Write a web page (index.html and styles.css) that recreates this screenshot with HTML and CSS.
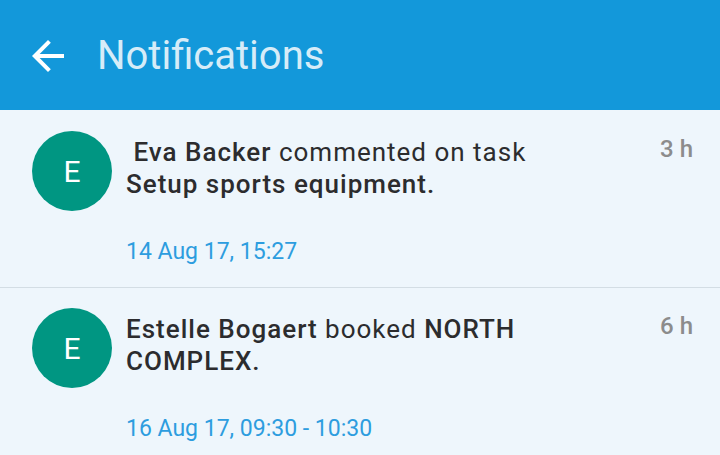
FILE: index.html
```html
<!DOCTYPE html>
<html>
<head>
<title>Notifications</title>
<link rel="stylesheet" href="styles.css">
</head>
<body>
    <header class="app-bar">
        <button class="back" aria-label="Back">
            <svg viewBox="0 0 24 24" width="48" height="48">
                <path d="M20 11H7.83l5.59-5.59L12 4l-8 8 8 8 1.41-1.41L7.83 13H20v-2z" fill="#ffffff"/>
            </svg>
        </button>
        <h1 class="title">Notifications</h1>
    </header>
    <main class="list">
        <div class="item">
            <div class="avatar">E</div>
            <div class="body">
                <p class="message"><b>&nbsp;Eva Backer</b> commented on task <b>Setup sports equipment.</b></p>
                <div class="date">14 Aug 17, 15:27</div>
            </div>
            <div class="time">3 h</div>
        </div>
        <div class="item">
            <div class="avatar">E</div>
            <div class="body">
                <p class="message"><b>Estelle Bogaert</b> booked <b>NORTH COMPLEX.</b></p>
                <div class="date">16 Aug 17, 09:30 - 10:30</div>
            </div>
            <div class="time">6 h</div>
        </div>
    </main>
</body>
</html>
```

FILE: styles.css
```css
/**
 * Generic styles
 */
* {
    box-sizing: border-box;
}
html, body {
    margin: 0;
    height: 100%;
}
body {
    font-family: Roboto, "Noto Sans", sans-serif;
    background-color: #eef6fc;
    overflow: hidden;
}

/**
 * App bar
 */
.app-bar {
    display: flex;
    align-items: center;
    height: 110px;
    padding-left: 24px;
    background-color: #1398da;
}
.back {
    display: flex;
    padding: 0;
    border: 0;
    background: none;
    margin-top: 1px;
}
.title {
    margin: 0 0 0 25px;
    font-size: 40px;
    font-weight: 400;
    color: #d6ecf8;
}

/**
 * Notification rows
 */
.item {
    display: flex;
    align-items: flex-start;
    padding: 20px 27px 21px 32px;
    border-bottom: 1px solid #d3dde4;
}
.item:first-child {
    padding-top: 21px;
}
.avatar {
    flex: none;
    display: flex;
    justify-content: center;
    align-items: center;
    width: 80px;
    height: 80px;
    border-radius: 50%;
    background-color: #009682;
    color: #ffffff;
    font-size: 30px;
}
.body {
    flex: 1;
    margin: 5px 0 0 14px;
    padding-right: 84px;
}
.message {
    margin: 0;
    font-size: 26px;
    line-height: 32px;
    letter-spacing: 1px;
    color: #2c2c2e;
}
.message b {
    font-weight: 500;
}
.date {
    margin-top: 38px;
    font-size: 23px;
    line-height: 28px;
    color: #2d9ddf;
}
.time {
    flex: none;
    margin-top: 4px;
    font-size: 24px;
    line-height: 28px;
    font-weight: 500;
    color: #8c8c8c;
}
```
